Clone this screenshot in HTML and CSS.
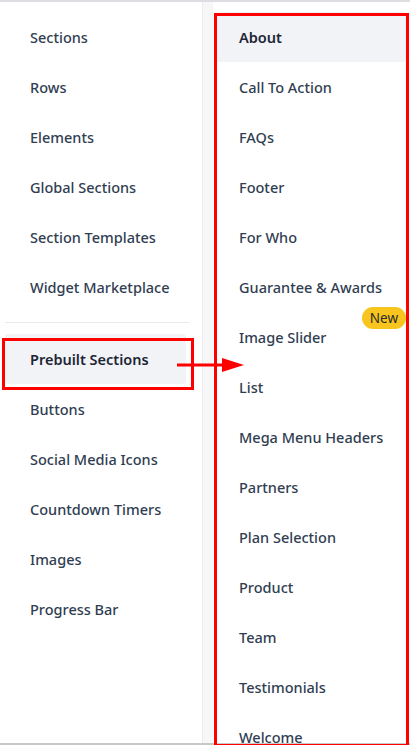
FILE: index.html
```html
<!DOCTYPE html>
<html>
<head>
<meta charset="utf-8">
<link rel="stylesheet" href="styles.css">
</head>
<body>
<div class="page">
  <nav class="left">
    <ul class="menu">
      <li class="item">Sections</li>
      <li class="item">Rows</li>
      <li class="item">Elements</li>
      <li class="item">Global Sections</li>
      <li class="item">Section Templates</li>
      <li class="item">Widget Marketplace</li>
    </ul>
    <hr class="divider">
    <ul class="menu">
      <li class="item active">Prebuilt Sections</li>
      <li class="item">Buttons</li>
      <li class="item">Social Media Icons</li>
      <li class="item">Countdown Timers</li>
      <li class="item">Images</li>
      <li class="item">Progress Bar</li>
    </ul>
  </nav>
  <div class="gutter"></div>
  <section class="right">
    <ul class="menu sub">
      <li class="item active">About</li>
      <li class="item">Call To Action</li>
      <li class="item">FAQs</li>
      <li class="item">Footer</li>
      <li class="item">For Who</li>
      <li class="item">Guarantee &amp; Awards</li>
      <li class="item badged">Image Slider<span class="badge">New</span></li>
      <li class="item">List</li>
      <li class="item">Mega Menu Headers</li>
      <li class="item">Partners</li>
      <li class="item">Plan Selection</li>
      <li class="item">Product</li>
      <li class="item">Team</li>
      <li class="item">Testimonials</li>
      <li class="item">Welcome</li>
    </ul>
  </section>
</div>
<div class="mark mark-left"></div>
<div class="mark mark-right"></div>
<div class="arrow">
  <svg width="68" height="16" viewBox="0 0 68 16">
    <rect x="0" y="6.5" width="48" height="3" fill="#ff0000"/>
    <polygon points="45,1 67,8 45,15" fill="#ff0000"/>
  </svg>
</div>
</body>
</html>
```

FILE: styles.css
```css
html, body {
  margin: 0;
  padding: 0;
  background: #fff;
}
body {
  font-family: "Noto Sans", "Open Sans", sans-serif;
  width: 410px;
  height: 745px;
  overflow: hidden;
  position: relative;
  border-top: 2px solid #dddee2;
  box-sizing: border-box;
}
.page {
  display: flex;
  height: 741px;
  border-bottom: 2px solid #c8c8c8;
}
.left {
  width: 203px;
  flex: none;
  padding: 10px 13px 0 5px;
  box-sizing: border-box;
  border-right: 1px solid #ececee;
}
.gutter {
  width: 10px;
  flex: none;
  background: #f7f7f8;
}
.right {
  flex: 1;
  padding: 10px 4px 0 3px;
  overflow: hidden;
}
.menu {
  list-style: none;
  margin: 0;
  padding: 0;
}
.item {
  height: 50px;
  display: flex;
  align-items: center;
  padding-left: 25px;
  font-size: 14.5px;
  font-weight: 500;
  color: #313e52;
  border-radius: 3px;
  position: relative;
}
.sub .item {
  padding-left: 23px;
}
.item.active {
  background: #f2f3f7;
  font-weight: 600;
  color: #1e2635;
}
.left .item.active {
  margin-right: 3px;
}
.divider {
  border: 0;
  border-top: 1px solid #e8e9ec;
  margin: 10px 0 11px 0;
}
.left .menu + .divider + .menu .item {
  height: 50px;
}
.badge {
  position: absolute;
  right: 0;
  top: -5px;
  height: 22px;
  padding: 0 8px;
  border-radius: 11px;
  background: #f7c51e;
  color: #2a2a2a;
  font-size: 13.5px;
  font-weight: 400;
  display: flex;
  align-items: center;
}
.mark {
  position: absolute;
  border: 3px solid #ff0000;
  box-sizing: border-box;
}
.mark-left {
  left: 2px;
  top: 336px;
  width: 192px;
  height: 52px;
}
.mark-right {
  left: 214px;
  top: 11px;
  width: 195px;
  height: 734px;
}
.arrow {
  position: absolute;
  left: 177px;
  top: 355px;
  width: 68px;
  height: 16px;
}
.arrow svg {
  display: block;
}
```
